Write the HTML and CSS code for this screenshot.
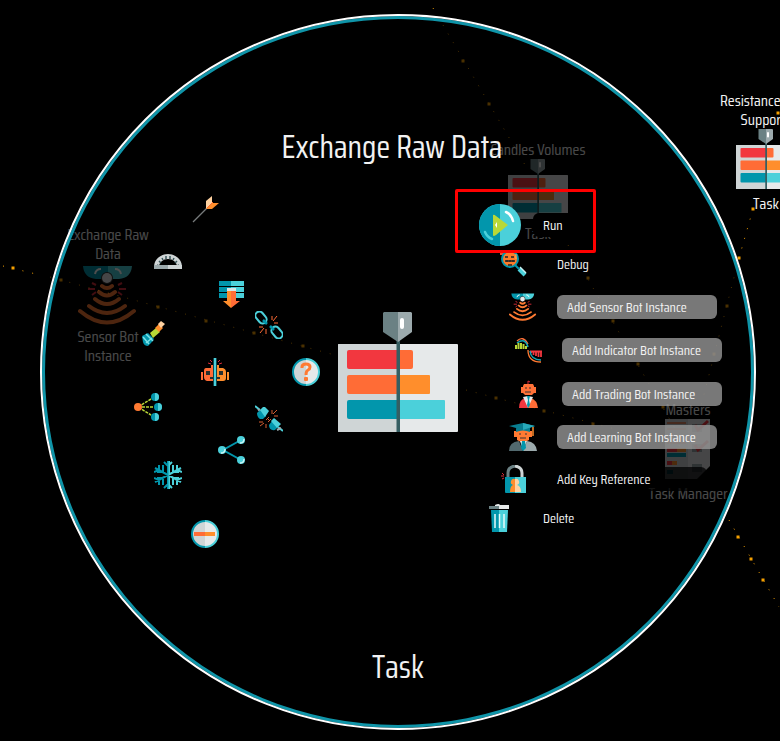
FILE: index.html
```html
<!DOCTYPE html>
<html lang="en">
<head>
<meta charset="utf-8">
<title>Exchange Raw Data - Task</title>
<link rel="stylesheet" href="styles.css">
</head>
<body>
<svg class="defs" aria-hidden="true">
  <symbol id="task" viewBox="0 0 120 120">
    <rect y="32" width="120" height="88" rx="1" fill="#e6e9ea"/><path d="M1 32h59v88H1a1 1 0 0 1-1-1V33a1 1 0 0 1 1-1" fill="#cfd5d6"/>
    <path d="M11 38h49v19H11a2 2 0 0 1-2-2V40a2 2 0 0 1 2-2" fill="#f2373f"/><path d="M60 38h13a2 2 0 0 1 2 2v15a2 2 0 0 1-2 2H60" fill="#ff6c36"/>
    <path d="M11 63h49v19H11a2 2 0 0 1-2-2V65a2 2 0 0 1 2-2" fill="#ff6c36"/><path d="M60 63h31a1 1 0 0 1 1 1v17a1 1 0 0 1-1 1H60" fill="#ff8e2c"/>
    <path d="M11 88h49v19H11a2 2 0 0 1-2-2V90a2 2 0 0 1 2-2" fill="#0296ac"/><path d="M60 88h46a1 1 0 0 1 1 1v17a1 1 0 0 1-1 1H60" fill="#4bd0da"/>
    <path d="M58.500 28h3.500v92h-3.500z" fill="#355e62"/>
    <path d="M46 0h14v30L45 20V1z" fill="#6b8184"/><path d="M60 0h13l1 1v19L60 30z" fill="#9caaad"/><rect x="62" y="6" width="4" height="11" rx="2" fill="#fff"/>
  </symbol>
  <symbol id="sensor" viewBox="0 0 60 60">
    <path d="M5 1h25v13H18Q6 13 5 1" fill="#0296ac"/><path d="M30 1h24q-1 12-13 13H30z" fill="#4bd0da"/>
    <path d="M17 9q1-5 6-5M43 9q-1-5-6-5" fill="none" stroke="#fff" stroke-width="2"/>
    <circle cx="29" cy="13" r="6" fill="#333"/><circle cx="29" cy="13" r="5" fill="#e6e9ea"/>
    <path d="M14 18l4 2M10 24h7M14 30l4-3M44 18l-4 2M48 24h-7M44 30l-4-3" stroke="#d82b38" stroke-width="2"/>
    <g fill="none" stroke="#ff7a32" stroke-width="4" stroke-linecap="round"><path d="M24 21q5 4 10 0M21 27q8 7 16 0M17 34q12 10 24 0M11 41q18 14 36 0M2 46q27 23 54 0"/></g>
  </symbol>
  <symbol id="run" viewBox="0 0 42 42">
    <circle cx="21" cy="21" r="21" fill="#4bd0da"/><path d="M21 0a21 21 0 0 0 0 42" fill="#0296ac"/>
    <path d="M14 11q1-1 3 1l12 9-12 10q-3 2-3 0z" fill="#b8d837"/><path d="M16 21l2-3v6z" fill="#fff"/>
    <path d="M27 8q5 2 7 9" fill="none" stroke="#fff" stroke-width="2.500" stroke-linecap="round"/><path d="M6 28q2 5 7 7" fill="none" stroke="#4bd0da" stroke-width="2.500" stroke-linecap="round"/>
  </symbol>
  <symbol id="debug" viewBox="0 0 28 28">
    <path d="M1 0h8v5H1z" fill="#f04a2d"/><circle cx="11" cy="9" r="8" fill="#ff7a28" stroke="#0296ac" stroke-width="2"/>
    <path d="M6 7h3M12 7h3M6 11h10M8 12v-2M11 12v-2M14 12v-2M9 15h4" stroke="#222" stroke-width="1.300"/><path d="M17 4v5" stroke="#ffb35c"/>
    <path d="M16 15l4 4" stroke="#0296ac" stroke-width="2"/><path d="M20 19l6 6" stroke="#4bd0da" stroke-width="4"/><path d="M21 17l6 6" stroke="#c8f2f4" stroke-width="1.500"/>
  </symbol>
  <symbol id="indicator" viewBox="0 0 28 28">
    <path d="M3 5Q9-1 14 8" fill="none" stroke="#ff7138" stroke-width="1.300"/><path d="M3 7q8-6 11 4" fill="none" stroke="#13a5b6" stroke-width="1.500"/>
    <path d="M2 13V9M4.500 13V7M7 13V7M9.500 13V8M12 13v-3" stroke="#b8d837" stroke-width="2"/>
    <path d="M16 15.500h12M17 15v2M19.500 15v4M22 15v5M24.500 15v6M27 15v6" stroke="#f2373f" stroke-width="1.800"/>
    <path d="M16 15q1 9 11 9" fill="none" stroke="#13a5b6" stroke-width="1.500"/><path d="M14 14q0 12 13 12" fill="none" stroke="#ff7a32" stroke-width="1.300"/>
  </symbol>
  <symbol id="trading" viewBox="0 0 28 28">
    <path d="M14 5V1l2 1" fill="none" stroke="#d82b38"/><path d="M10 4h9l1 2v7l-2 2h-7l-2-2V6zM7 7h2v6H7zM20 7h2v6h-2z" fill="#ff7138"/><path d="M11 8h2M15 8h2M11 12h6" stroke="#333" stroke-width="1"/>
    <path d="M5 28q0-9 7-10l2 10" fill="#f2373f"/><path d="M14 28l3-10q6 2 7 10" fill="#ff6c36"/><path d="M9 17l5 11 5-11-5-1z" fill="#e6e9ea"/><path d="M13 16h3l-1 4 1 5-2 3-1-3 1-5z" fill="#0296ac"/>
  </symbol>
  <symbol id="learning" viewBox="0 0 28 28">
    <path d="M0 28q0-9 10-10l4 10" fill="#52696e"/><path d="M14 28l4-10q9 1 10 10" fill="#9caaad"/><path d="M8 7h12v10q-6 4-12 0zM5 8h3v6H5zM20 8h3v6h-3z" fill="#ff7a32"/>
    <path d="M0 3l14-3 12 3-12 4zM7 4h14v5q-7-3-14 0z" fill="#087d90"/><path d="M14 0l12 3-12 4z" fill="#27a9b9"/><path d="M24 4v9" stroke="#ff8e2c" stroke-width="1.500"/><path d="M10 11h2M16 11h2M11 15h6" stroke="#333" stroke-width="1"/>
    <path d="M11 18l3 9 4-9z" fill="#e6e9ea"/><path d="M13 18h3l1 7-3 3-2-3z" fill="#0296ac"/>
  </symbol>
  <symbol id="lock" viewBox="0 0 28 28">
    <path d="M9 13V8q0-6 7-7" fill="none" stroke="#6b8184" stroke-width="3"/><path d="M16 1q7 1 7 7v5" fill="none" stroke="#cfd5d6" stroke-width="3"/>
    <path d="M6 12h10v16H7q-1 0-1-1z" fill="#0296ac"/><path d="M16 12h11v16H16z" fill="#4bd0da"/><path d="M16 14a3 3 0 0 0-2 6q-3 1-3 7h5" fill="#ff8e2c"/><path d="M16 14a3 3 0 0 1 2 6q4 1 4 7h-6" fill="#ffd2a1"/><path d="M3 8l2 2M2 11h3M3 14l2-1" stroke="#d82b38"/>
  </symbol>
  <symbol id="trash" viewBox="0 0 28 28">
    <path d="M4 3h6V1q4-2 5 0h9v4H4z" fill="#e6e9ea"/><path d="M4 2h10v3H4z" fill="#6b8184"/><path d="M6 6h8v22H7z" fill="#0296ac"/><path d="M14 6h9l-1 22h-8z" fill="#4bd0da"/><path d="M10 10v14M14.500 10v14M19 10v14" stroke="#e6fafa" stroke-width="1.500"/>
  </symbol>
  <symbol id="arrow" viewBox="0 0 28 28">
    <path d="M1 27l16-16" stroke="#777b7c" stroke-width="1.300"/><path d="M14 6l6-5v7l-6 6z" fill="#ffd2a1"/><path d="M14 14l6-6h7l-7 6z" fill="#ff8e2c"/><path d="M15 13l6-6" stroke="#ff6c36"/>
  </symbol>
  <symbol id="protractor" viewBox="0 0 28 28">
    <path d="M0 17a14 13 0 0 1 28 0h-5a9 8 0 0 0-18 0z" fill="#cfd5d6"/><path d="M3 15l2 1M5 11l2 2M8 8l1 2M12 6v3M16 6v3M20 8l-1 2M23 11l-2 2M25 15l-2 1" stroke="#385559" stroke-width="1.500"/><path d="M0 15h14v4H0z" fill="#9caaad"/><path d="M14 15h14v4H14z" fill="#cfd5d6"/>
  </symbol>
  <symbol id="collapse" viewBox="0 0 28 28">
    <path d="M1 1h12v5H1zM1 7h12v5H1zM1 13h12v5H1z" fill="#0296ac"/><path d="M13 1h13v5H13zM13 7h13v5H13zM13 13h13v5H13z" fill="#4bd0da"/><path d="M9 8h9v3H9z" fill="#d8e5e7"/><path d="M9 11h4v17l-8-7h4z" fill="#ff8e2c"/><path d="M13 11h5v10h4l-9 7z" fill="#ff6c36"/>
  </symbol>
  <symbol id="chain" viewBox="0 0 28 28">
    <g fill="none" stroke="#4bd0da" stroke-width="2"><rect x="2" y="0" width="8" height="13" rx="4" transform="rotate(-40 6 6.500)"/><rect x="18" y="15" width="8" height="13" rx="4" transform="rotate(-40 22 21.500)"/></g><path d="M8 9l4 4M15 15l4 4" stroke="#0296ac" stroke-width="2.500"/><path d="M17 9V5M18 10l4-5M19 12h4M11 18v5M9 17l-4 5M8 16H4" stroke="#ff6c36"/>
  </symbol>
  <symbol id="flash" viewBox="0 0 28 28">
    <path d="M4 16l6-3 6 6-3 4-3 3q-4 0-5-4z" fill="#0296ac"/><path d="M8 14l7 7M5 17l6 7M14 18l-6 5" stroke="#7be1e8" stroke-width="1.500"/><path d="M12 13l6-5 4 4-7 6z" fill="#b8d837"/><path d="M17 8l4-4 4 4-4 4z" fill="#ff8e2c"/><path d="M20 4l3-3 4 3-4 4z" fill="#ffd2a1"/>
  </symbol>
  <symbol id="robot" viewBox="0 0 28 28">
    <path d="M5 10h5V7h4v16H6q-3-1-3-4v-6q0-3 2-3M0 14h2v8H0z" fill="#ff6c36"/><path d="M14 7h4v3h4q3 1 3 4v6q0 3-3 3h-8zM26 14h2v8h-2z" fill="#ff8e2c"/><path d="M5 13h4v4H5zM18 13h4v4h-4zM9 19h10v2H9z" fill="#28302f"/><path d="M7 5l3 1M9 2l2 2M19 2l-2 2M21 5l-3 1" stroke="#d82b38"/><path d="M14 0v28" stroke="#11464d" stroke-width="4"/><path d="M14 0v28" stroke="#4bd0da" stroke-width="2"/>
  </symbol>
  <symbol id="help" viewBox="0 0 28 28">
    <circle cx="14" cy="14" r="13" fill="#e6e9ea"/><path d="M14 1a13 13 0 0 0 0 26" fill="#cfd5d6"/><path d="M14 1a13 13 0 0 0 0 26" fill="none" stroke="#0296ac" stroke-width="2"/><path d="M14 1a13 13 0 0 1 0 26" fill="none" stroke="#4bd0da" stroke-width="2"/>
    <path d="M10 10V9q0-3 4-3t4 3q0 2-2 3t-2 5" fill="none" stroke="#ff7a32" stroke-width="3"/><rect x="12" y="19" width="4" height="4" rx="1" fill="#ff7a32"/>
  </symbol>
  <symbol id="share" viewBox="0 0 28 28">
    <path d="M23 4L5 14l18 10" stroke="#0296ac" stroke-width="2" fill="none"/><g fill="#4bd0da"><circle cx="23" cy="4" r="4"/><circle cx="4" cy="14" r="4"/><circle cx="23" cy="24" r="4"/></g><path d="M22 7q4 0 4-4M3 17q4 0 4-4M22 27q4 0 4-4" stroke="#d5f6f7" stroke-width="1.300" fill="none"/>
  </symbol>
  <symbol id="nodes" viewBox="0 0 28 28">
    <path d="M17 6L4 14l13 8M4 14h16" fill="none" stroke="#b8d837" stroke-width="1.500" stroke-dasharray="3 1"/><circle cx="4" cy="14" r="4" fill="#ff7a32"/><g fill="#0296ac"><circle cx="21" cy="4" r="4"/><circle cx="24" cy="14" r="4"/><circle cx="21" cy="24" r="4"/></g><path d="M21 0a4 4 0 0 1 0 8M24 10a4 4 0 0 1 0 8M21 20a4 4 0 0 1 0 8" fill="#4bd0da"/>
  </symbol>
  <symbol id="plug" viewBox="0 0 28 28">
    <path d="M0 1l5 4M23 22l5 4" stroke="#4bd0da" stroke-width="2"/><path d="M3 4l3 3M22 25l4-2" stroke="#9caaad" stroke-width="2"/><path d="M2 8l3-3 6 6-3 3h-3q-3-2-3-6" fill="#0296ac"/><path d="M5 5l3-3h2l4 4-4 6z" fill="#4bd0da"/><path d="M14 20l3-4 6 6-3 3q-6 1-6-5" fill="#0296ac"/><path d="M16 16l3-3 7 6-4 4z" fill="#4bd0da"/><path d="M11 15l3-3M13 17l3-3M12 13l3 3M17 9V5M18 9l4-4M19 11h4M8 17H4M9 18l-4 3M11 19v4" stroke="#d85f32"/>
  </symbol>
  <symbol id="snow" viewBox="0 0 28 28">
    <path d="M14 14L1 7M14 14L1 21M5 4v5L0 11M9 4v7H3M5 24v-5L0 17M9 24v-7H3M14 0v28M10 1l4 4M10 27l4-4" fill="none" stroke="#0296ac" stroke-width="2"/><path d="M14 14l13-7M14 14l13 7M23 4v5l5 2M19 4v7h6M23 24v-5l5-2M19 24v-7h6M18 1l-4 4M18 27l-4-4M15 0v28" fill="none" stroke="#4bd0da" stroke-width="2"/><path d="M14 0v28" stroke="#0296ac"/>
  </symbol>
  <symbol id="minus" viewBox="0 0 28 28">
    <circle cx="14" cy="14" r="13" fill="#e6e9ea"/><path d="M14 1a13 13 0 0 0 0 26" fill="#cfd5d6"/><path d="M14 1a13 13 0 0 0 0 26" fill="none" stroke="#0296ac" stroke-width="2"/><path d="M14 1a13 13 0 0 1 0 26" fill="none" stroke="#4bd0da" stroke-width="2"/><path d="M3 12h11v4H3z" fill="#ff6c36"/><path d="M14 12h10v4H14z" fill="#ff8e2c"/>
  </symbol>
  <symbol id="manager" viewBox="0 0 46 60">
    <path d="M0 0h23v60H0z" fill="#cfd5d6"/><path d="M23 0h22v47L32 60h-9z" fill="#e6e9ea"/><path d="M2 4h19M2 10h19M2 24h19" stroke="#e58a68" stroke-width="2"/><path d="M2 31h10M2 44h5" stroke="#f2373f" stroke-width="4"/><path d="M12 31h9M7 44h5" stroke="#ff8e2c" stroke-width="4"/><path d="M2 36h19M2 53h6" stroke="#0296ac" stroke-width="4"/><path d="M27 5h10v8H27zM27 25h10v8H27zM27 45h10v8H27z" fill="#9caaad"/><path d="M30 6l3 5 10-9M30 26l3 5 10-9" fill="none" stroke="#f2373f" stroke-width="3"/>
  </symbol>
</svg>
<main class="canvas">
  <svg class="links" aria-hidden="true">
    <g class="faint">
      <path class="dots" d="M50 277L331 354M466 390L688 448M443 25L528 170M568 245L680 437M739 258L700 410"/>
      <path class="sparks" d="M61 280h0M158 307h0M206 321h0M254 333h0M303 346h0M496 398h0M544 411h0M593 424h0M463 61h0M489 104h0M588 278h0M613 321h0M638 364h0M663 407h0M727 306h0M714 354h0"/>
    </g>
    <path class="dots" d="M3 266L40 275M433 8L438 17M753 209L739 258M729 520L779 607"/>
    <path class="sparks" d="M13 268h0M753 209h0M739 258h0M738 537h0M751 559h0M763 580h0M778 113h0"/>
  </svg>

  <section class="node dim sensor-node"><h3>Exchange Raw Data</h3><svg><use href="#sensor"/></svg><p>Sensor Bot Instance</p></section>
  <section class="node dim candles-node"><h3>Candles Volumes</h3><svg><use href="#task"/></svg><p>Task</p></section>
  <section class="node dim manager-node"><h3>Masters</h3><svg><use href="#manager"/></svg><p>Task Manager</p></section>
  <section class="node resist-node"><h3>Resistances And Supports</h3><svg><use href="#task"/></svg><p>Task</p></section>

  <div class="ring">
    <h1>Exchange Raw Data</h1>
    <svg class="core"><use href="#task"/></svg>
    <h2>Task</h2>
  </div>

  <nav aria-label="Node tools">
    <button class="tool arrow" aria-label="Detach"><svg><use href="#arrow"/></svg></button>
    <button class="tool protractor" aria-label="Angle"><svg><use href="#protractor"/></svg></button>
    <button class="tool collapse" aria-label="Collapse"><svg><use href="#collapse"/></svg></button>
    <button class="tool chain" aria-label="Reference"><svg><use href="#chain"/></svg></button>
    <button class="tool flash" aria-label="Highlight"><svg><use href="#flash"/></svg></button>
    <button class="tool robot" aria-label="Clone"><svg><use href="#robot"/></svg></button>
    <button class="tool help" aria-label="Help"><svg><use href="#help"/></svg></button>
    <button class="tool nodes" aria-label="Branches"><svg><use href="#nodes"/></svg></button>
    <button class="tool plug" aria-label="Disconnect"><svg><use href="#plug"/></svg></button>
    <button class="tool share" aria-label="Share"><svg><use href="#share"/></svg></button>
    <button class="tool snow" aria-label="Freeze"><svg><use href="#snow"/></svg></button>
    <button class="tool minus" aria-label="Remove"><svg><use href="#minus"/></svg></button>
  </nav>

  <nav aria-label="Node actions">
    <button class="action debug"><svg><use href="#debug"/></svg><span>Debug</span></button>
    <button class="action run"><svg><use href="#run"/></svg><span>Run</span></button>
    <button class="action add-sensor pill"><svg><use href="#sensor"/></svg><span>Add Sensor Bot Instance</span></button>
    <button class="action add-indicator pill"><svg><use href="#indicator"/></svg><span>Add Indicator Bot Instance</span></button>
    <button class="action add-trading pill"><svg><use href="#trading"/></svg><span>Add Trading Bot Instance</span></button>
    <button class="action add-learning pill"><svg><use href="#learning"/></svg><span>Add Learning Bot Instance</span></button>
    <button class="action add-key"><svg><use href="#lock"/></svg><span>Add Key Reference</span></button>
    <button class="action delete"><svg><use href="#trash"/></svg><span>Delete</span></button>
  </nav>
  <div class="marker"></div>
</main>
</body>
</html>
```
FILE: styles.css
```css
* { box-sizing: border-box; }
body { margin: 0; background: #000; color: #f2f2f2; font-family: "Saira Condensed", "Liberation Sans Narrow", "Roboto Condensed", "Open Sans Condensed", "Roboto", sans-serif; }
h1, h2, h3, p { margin: 0; font-weight: 400; }
button { font: inherit; color: inherit; background: none; border: 0; padding: 0; cursor: pointer; }
.defs { position: absolute; width: 0; height: 0; }
.canvas { position: relative; min-height: 100vh; overflow: hidden; }

.links { position: absolute; inset: 0; width: 100%; height: 100%; }
.dots, .sparks { fill: none; stroke: #f5a000; }
.dots { stroke-width: 1; stroke-dasharray: 1 9; }
.sparks { stroke-width: 3; stroke-linecap: square; }
.faint { opacity: 0.3; }

.node { position: absolute; display: flex; flex-direction: column; align-items: center; text-align: center; font-size: 16px; line-height: 19px; }
.node h3 { font-size: inherit; }
.node svg { width: 60px; height: 60px; }
.dim { opacity: 0.3; }
.sensor-node { left: 63px; top: 225px; width: 90px; gap: 2px; }
.candles-node { left: 483px; top: 140px; width: 110px; }
.candles-node p { padding-top: 5px; }
.manager-node { left: 633px; top: 400px; width: 110px; }
.manager-node p { padding-top: 5px; }
.resist-node { left: 711px; top: 91px; width: 110px; }
.resist-node p { padding-top: 5px; }

.ring { position: absolute; left: 40px; top: 14px; width: 716px; height: 716px; border: 2px solid #fff; border-radius: 50%; box-shadow: inset 0 0 0 3px #0f94a8; display: flex; flex-direction: column; align-items: center; }
.ring h1 { font-size: 32px; line-height: 40px; margin: 111px 12px 0 0; }
.ring h2 { font-size: 32px; line-height: 40px; margin-top: 215px; }
.core { width: 120px; height: 120px; margin-top: 145px; }

.tool { position: absolute; width: 28px; height: 28px; }
.tool svg { display: block; width: 28px; height: 28px; }
.arrow { left: 192px; top: 195px; }
.protractor { left: 154px; top: 250px; }
.collapse { left: 218px; top: 280px; }
.chain { left: 255px; top: 311px; }
.flash { left: 138px; top: 320px; }
.robot { left: 201px; top: 358px; }
.help { left: 292px; top: 358px; }
.nodes { left: 134px; top: 393px; }
.plug { left: 255px; top: 405px; }
.share { left: 218px; top: 436px; }
.snow { left: 154px; top: 461px; }
.minus { left: 191px; top: 520px; }

.action { position: absolute; display: flex; align-items: center; gap: 20px; font-size: 14px; line-height: 24px; text-align: left; }
.action svg { width: 28px; height: 28px; }
.action span { width: 160px; padding-left: 10px; border-radius: 6px; background: rgba(0, 0, 0, 0.75); white-space: nowrap; }
.pill span { background: rgba(150, 150, 150, 0.8); }
.run { left: 479px; top: 204px; gap: 12px; }
.run svg { width: 42px; height: 42px; }
.run span { background: #000; }
.debug { left: 499px; top: 250px; }
.add-sensor { left: 509px; top: 293px; }
.add-indicator { left: 514px; top: 336px; }
.add-trading { left: 514px; top: 380px; }
.add-learning { left: 509px; top: 423px; }
.add-key { left: 499px; top: 465px; }
.delete { left: 485px; top: 504px; }

.marker { position: absolute; left: 455px; top: 189px; width: 141px; height: 64px; border: 3px solid #f00; border-radius: 2px; pointer-events: none; }
```
